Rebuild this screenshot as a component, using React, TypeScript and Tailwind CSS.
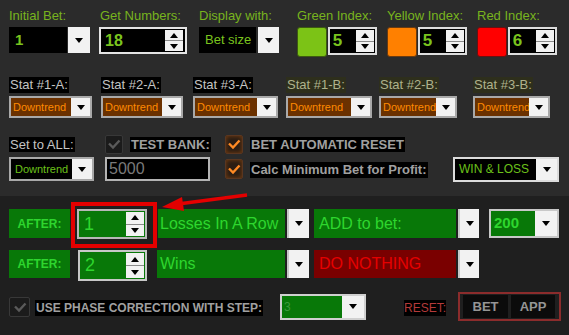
import React from "react";

const TriDown = () => (
  <div className="w-0 h-0 border-l-[4px] border-r-[4px] border-t-[5px] border-l-transparent border-r-transparent border-t-black" />
);
const TriUp = () => (
  <div className="w-0 h-0 border-l-[4px] border-r-[4px] border-b-[5px] border-l-transparent border-r-transparent border-b-black" />
);

const Spinner = ({ cls = "" }: { cls?: string }) => (
  <div className={"flex flex-col w-[18px] bg-[#f2f2f2] " + cls}>
    <div className="flex-1 flex items-center justify-center border-b border-[#8a8a8a]">
      <TriUp />
    </div>
    <div className="flex-1 flex items-center justify-center">
      <TriDown />
    </div>
  </div>
);

const DropBtn = ({ cls = "" }: { cls?: string }) => (
  <div className={"flex items-center justify-center bg-[#f2f2f2] " + cls}>
    <TriDown />
  </div>
);

const Check = ({ color }: { color: string }) => (
  <svg width="14" height="12" viewBox="0 0 14 12">
    <path d="M2 5.5 L6 9.5 L12.5 2.5" fill="none" stroke={color} strokeWidth="2.4" />
  </svg>
);

const DarkBox = ({ cls = "" }: { cls?: string }) => (
  <div className={"flex items-center justify-center bg-[#1b1b1b] border border-[#383838] rounded-[2px] " + cls}>
    <Check color="#5a5a5a" />
  </div>
);
const OrangeBox = ({ cls = "" }: { cls?: string }) => (
  <div className={"flex items-center justify-center bg-[#2b1d14] border border-[#5a3620] rounded-[2px] shadow-[inset_0_0_4px_#7a4010] " + cls}>
    <Check color="#ff8a24" />
  </div>
);

const Label = ({ children }: { children: React.ReactNode }) => (
  <div className="h-[16px] text-[13px] leading-[16px] text-[#78b41e] whitespace-nowrap">{children}</div>
);

const IndexGroup = ({ label, color, border, value, ml }: { label: string; color: string; border: string; value: string; ml: string }) => (
  <div className={"w-[80px] " + ml}>
    <Label>{label}</Label>
    <div className="mt-[3px] flex items-start">
      <div className={"w-[30px] h-[30px] rounded-[3px] border " + color + " " + border} />
      <div className="ml-[1px] w-[50px] h-[28px] border-2 border-[#dcdcdc] bg-black flex">
        <div className="flex-1 flex items-center pl-[3px] text-[17px] font-bold text-[#7ac41e]">{value}</div>
        <Spinner cls="my-[1px] mr-[1px]" />
      </div>
    </div>
  </div>
);

const StatDrop = ({ label, b, w, ml }: { label: string; b?: boolean; w: string; ml: string }) => (
  <div className={w + " " + ml}>
    <div className="h-[16px] flex">
      <span
        className={
          "text-[13px] leading-[16px] px-[1px] whitespace-nowrap " +
          (b ? "bg-[#2e2f1c] text-[#aeb28c]" : "bg-black text-[#c4c4c4]")
        }
      >
        {label}
      </span>
    </div>
    <div className="mt-[3px] h-[22px] border-2 border-[#a9a9a9] flex">
      <div className="flex-1 bg-[#6b3100] flex items-center pl-[2px] text-[11px] text-[#ff8a00] overflow-hidden whitespace-nowrap">
        Downtrend
      </div>
      <DropBtn cls="w-[19px]" />
    </div>
  </div>
);

export default function App() {
  const font = { fontFamily: '"Liberation Sans", Arial, sans-serif' };
  return (
    <div className="relative w-[569px] h-[335px] overflow-hidden" style={font}>
      {/* top section */}
      <div className="h-[196px] bg-[#2b2b2b]">
        {/* Row 1 */}
        <div className="flex pt-[8px] pl-[9px]">
          <div className="w-[81px]">
            <Label>Initial Bet:</Label>
            <div className="mt-[3px] h-[26px] flex">
              <div className="w-[58px] bg-black flex items-center pl-[6px] text-[15px] font-bold text-[#7ac41e]">1</div>
              <DropBtn cls="ml-[1px] w-[22px]" />
            </div>
          </div>
          <div className="ml-[9px] w-[88px]">
            <Label>
              <span className="pl-[1px]">Get Numbers:</span>
            </Label>
            <div className="mt-[3px] h-[27px] border-2 border-[#e4e4e4] bg-black flex">
              <div className="flex-1 flex items-center pl-[4px] text-[16px] font-bold text-[#7ac41e]">18</div>
              <Spinner cls="my-[1px] mr-[2px]" />
            </div>
          </div>
          <div className="ml-[12px] w-[80px]">
            <Label>Display with:</Label>
            <div className="mt-[3px] h-[26px] flex">
              <div className="w-[58px] bg-black flex items-center pl-[6px] text-[13px] text-[#7ac41e] whitespace-nowrap">Bet size</div>
              <DropBtn cls="ml-[2px] w-[21px]" />
            </div>
          </div>
          <IndexGroup label="Green Index:" color="bg-[#7cc316]" border="border-[#3d5a10]" value="5" ml="ml-[18px]" />
          <IndexGroup label="Yellow Index:" color="bg-[#ff8000]" border="border-[#6a3a10]" value="5" ml="ml-[10px]" />
          <IndexGroup label="Red Index:" color="bg-[#ff0000]" border="border-[#6a1010]" value="6" ml="ml-[10px]" />
        </div>

        {/* Row 2 */}
        <div className="flex mt-[20px] pl-[9px]">
          <StatDrop label="Stat #1-A:" w="w-[83px]" ml="" />
          <StatDrop label="Stat #2-A:" w="w-[82px]" ml="ml-[9px]" />
          <StatDrop label="Stat #3-A:" w="w-[85px]" ml="ml-[10px]" />
          <StatDrop label="Stat #1-B:" b w="w-[86px]" ml="ml-[8px]" />
          <StatDrop label="Stat #2-B:" b w="w-[78px]" ml="ml-[7px]" />
          <StatDrop label="Stat #3-B:" b w="w-[77px]" ml="ml-[16px]" />
        </div>

        {/* Row 3a */}
        <div className="flex items-center mt-[16px] h-[20px] pl-[9px]">
          <div className="w-[96px]">
            <span className="bg-black text-[13px] leading-[15px] text-[#c4c4c4] px-[1px] inline-block whitespace-nowrap">Set to ALL:</span>
          </div>
          <DarkBox cls="w-[18px] h-[19px]" />
          <div className="ml-[7px] w-[95px]">
            <span className="bg-black text-[13px] leading-[15px] font-bold text-[#a0a0a0] px-[1px] inline-block whitespace-nowrap">TEST BANK:</span>
          </div>
          <OrangeBox cls="w-[18px] h-[19px]" />
          <div className="ml-[7px]">
            <span className="bg-black text-[13px] leading-[15px] font-bold text-[#a0a0a0] px-[1px] inline-block whitespace-nowrap">BET AUTOMATIC RESET</span>
          </div>
        </div>

        {/* Row 3b */}
        <div className="flex items-center mt-[3px] h-[24px] pl-[9px]">
          <div className="w-[85px] h-[24px] border-2 border-[#a9a9a9] flex">
            <div className="flex-1 bg-black flex items-center pl-[4px] text-[11px] text-[#6cc01a] whitespace-nowrap">Downtrend</div>
            <DropBtn cls="w-[20px]" />
          </div>
          <div className="ml-[11px] w-[105px] h-[24px] border-2 border-[#b4b4b4] bg-black flex items-center pl-[2px] text-[16px] text-[#7a7a7a]">
            5000
          </div>
          <OrangeBox cls="ml-[15px] w-[18px] h-[20px]" />
          <div className="ml-[7px] w-[203px]">
            <span className="bg-black text-[13px] leading-[16px] font-bold text-[#a0a0a0] px-[1px] inline-block whitespace-nowrap">Calc Minimum Bet for Profit:</span>
          </div>
          <div className="w-[106px] h-[25px] border-2 border-[#dcdcdc] flex">
            <div className="flex-1 bg-black flex items-center pl-[4px] text-[12px] text-[#6cc01a] whitespace-nowrap">WIN &amp; LOSS</div>
            <DropBtn cls="w-[21px]" />
          </div>
        </div>
      </div>

      {/* bottom section */}
      <div className="h-[139px] bg-[#1f1f1f] pt-[6px]">
        {/* Row 4 */}
        <div className="flex items-start pl-[9px]">
          <div className="mt-[7px] w-[61px] h-[29px] bg-[#087808] flex items-center justify-center text-[12px] font-bold text-[#2ed62e]">AFTER:</div>
          <div className="ml-[1px] w-[86px] h-[46px] border-4 border-[#e40000] bg-[#1f1f1f] pt-[3px] pl-[2px]">
            <div className="w-[70px] h-[30px] border-2 border-[#b8b8b8] bg-[#087808] flex">
              <div className="flex-1 flex items-center pl-[5px] text-[18px] text-[#2ed62e]">1</div>
              <Spinner cls="my-[1px] mr-[1px]" />
            </div>
          </div>
          <div className="mt-[7px] ml-[1px] w-[127px] h-[29px] bg-[#087808] flex items-center pl-[2px] text-[16px] text-[#2ed62e] whitespace-nowrap">Losses In A Row</div>
          <DropBtn cls="mt-[7px] ml-[2px] w-[22px] h-[29px] border-l-2 border-[#c8c8c8]" />
          <div className="mt-[7px] ml-[5px] w-[142px] h-[29px] bg-[#087808] flex items-center pl-[5px] text-[16px] text-[#2ed62e] whitespace-nowrap">ADD to bet:</div>
          <DropBtn cls="mt-[7px] ml-[2px] w-[21px] h-[29px] border-l-2 border-[#c8c8c8]" />
          <div className="mt-[7px] ml-[10px] w-[70px] h-[29px] border-2 border-[#c8c8c8] flex">
            <div className="flex-1 bg-[#087808] flex items-center pl-[3px] text-[15px] font-bold text-[#2ed62e]">200</div>
            <DropBtn cls="w-[22px]" />
          </div>
        </div>

        {/* Row 5 */}
        <div className="flex items-start mt-[2px] pl-[9px]">
          <div className="w-[61px] h-[28px] bg-[#087808] flex items-center justify-center text-[12px] font-bold text-[#2ed62e]">AFTER:</div>
          <div className="ml-[8px] w-[69px] h-[31px] border-2 border-[#c8c8c8] bg-[#087808] flex">
            <div className="flex-1 flex items-center pl-[5px] text-[18px] text-[#2ed62e]">2</div>
            <Spinner cls="my-[1px] mr-[1px]" />
          </div>
          <div className="ml-[10px] w-[128px] h-[28px] bg-[#087808] flex items-center pl-[3px] text-[16px] text-[#2ed62e]">Wins</div>
          <DropBtn cls="ml-[2px] w-[22px] h-[28px] border-l-2 border-[#c8c8c8]" />
          <div className="ml-[5px] w-[142px] h-[28px] bg-[#7a0000] flex items-center pl-[5px] text-[16px] text-[#e60000] whitespace-nowrap">DO NOTHING</div>
          <DropBtn cls="ml-[2px] w-[21px] h-[28px] border-l-2 border-[#c8c8c8]" />
        </div>

        {/* Row 6 */}
        <div className="flex items-center mt-[11px] h-[29px] pl-[9px]">
          <DarkBox cls="w-[21px] h-[20px]" />
          <div className="ml-[5px] w-[245px]">
            <span className="bg-black text-[12px] leading-[16px] font-bold text-[#a0a0a0] px-[1px] inline-block whitespace-nowrap">USE PHASE CORRECTION WITH STEP:</span>
          </div>
          <div className="w-[86px] h-[26px] border-2 border-[#d0d0d0] flex">
            <div className="flex-1 bg-[#087808] flex items-center pl-[2px] text-[12px] text-[#3c9a3c]">3</div>
            <DropBtn cls="w-[22px]" />
          </div>
          <div className="ml-[38px] w-[54px]">
            <span className="bg-black text-[12px] leading-[16px] text-[#b43a3a] inline-block whitespace-nowrap">RESET:</span>
          </div>
          <div className="w-[103px] h-[29px] border-2 border-[#8c2c2c] flex items-center pl-[3px] gap-[3px]">
            <div className="w-[45px] h-[23px] bg-[#0b0b0b] flex items-center justify-center text-[13px] font-bold text-[#959595]">BET</div>
            <div className="w-[44px] h-[23px] bg-[#0b0b0b] flex items-center justify-center text-[13px] font-bold text-[#959595]">APP</div>
          </div>
        </div>
      </div>

      {/* red arrow annotation */}
      <svg className="absolute left-0 top-0 pointer-events-none" width="569" height="335" viewBox="0 0 569 335">
        <line x1="247" y1="195" x2="178" y2="204" stroke="#e40000" strokeWidth="3.5" />
        <polygon points="162,207 182,197 184,211" fill="#e40000" />
      </svg>
    </div>
  );
}
